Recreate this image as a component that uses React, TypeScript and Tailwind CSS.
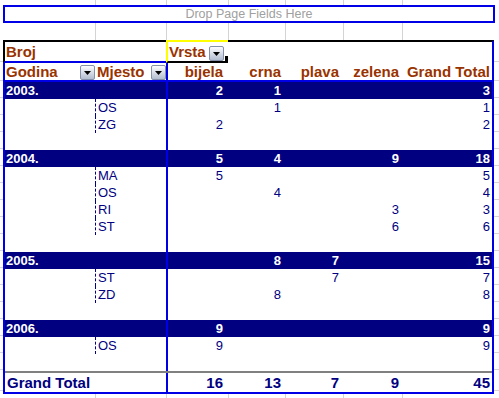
import React from 'react'

type Vals = [string, string, string, string, string]

interface Group {
  year: string
  totals: Vals
  items: { name: string; vals: Vals }[]
}

const GROUPS: Group[] = [
  {
    year: '2003.',
    totals: ['2', '1', '', '', '3'],
    items: [
      { name: 'OS', vals: ['', '1', '', '', '1'] },
      { name: 'ZG', vals: ['2', '', '', '', '2'] },
    ],
  },
  {
    year: '2004.',
    totals: ['5', '4', '', '9', '18'],
    items: [
      { name: 'MA', vals: ['5', '', '', '', '5'] },
      { name: 'OS', vals: ['', '4', '', '', '4'] },
      { name: 'RI', vals: ['', '', '', '3', '3'] },
      { name: 'ST', vals: ['', '', '', '6', '6'] },
    ],
  },
  {
    year: '2005.',
    totals: ['', '8', '7', '', '15'],
    items: [
      { name: 'ST', vals: ['', '', '7', '', '7'] },
      { name: 'ZD', vals: ['', '8', '', '', '8'] },
    ],
  },
  {
    year: '2006.',
    totals: ['9', '', '', '', '9'],
    items: [{ name: 'OS', vals: ['9', '', '', '', '9'] }],
  },
]

const GRAND: Vals = ['16', '13', '7', '9', '45']
const HEADERS: Vals = ['bijela', 'crna', 'plava', 'zelena', 'Grand Total']

// value columns C..G, C carries the blue divider
const COLS = [
  'w-[62px] border-l-2 border-[#0000e6] pr-[5px]',
  'w-[57px] pr-[4px]',
  'w-[58px] pr-[4px]',
  'w-[59px] pr-[3px]',
  'w-[90px] pr-[2px]',
]

function DropBtn() {
  return (
    <span className="flex h-[15px] w-[15px] shrink-0 items-end justify-center rounded-[2px] border border-[#8591a8] bg-linear-to-b from-[#fdfdff] to-[#b3bdd0] pb-[4px]">
      <svg width="7" height="4" viewBox="0 0 7 4">
        <path d="M0 0h7L3.5 4z" fill="#000" />
      </svg>
    </span>
  )
}

// sheet gridlines outside the pivot table
function GridRow({ h }: { h: string }) {
  return (
    <div className={`flex ${h}`}>
      <div className="w-[96px] border-r border-[#d4d4d4]" />
      <div className="w-[71px] border-r border-[#d4d4d4]" />
      <div className="w-[62px] border-r border-[#d4d4d4]" />
      <div className="w-[57px] border-r border-[#d4d4d4]" />
      <div className="w-[58px] border-r border-[#d4d4d4]" />
      <div className="w-[59px] border-r border-[#d4d4d4]" />
      <div className="flex-1" />
    </div>
  )
}

function Ticks() {
  return (
    <div className="flex flex-col">
      <div className="h-[22px] border-b border-[#d4d4d4]" />
      <div className="h-[19px] border-b border-[#d4d4d4]" />
      {Array.from({ length: 17 }).map((_, i) => (
        <div key={i} className="h-[17px] border-b border-[#d4d4d4]" />
      ))}
      <div className="h-[21px] border-b border-[#d4d4d4]" />
    </div>
  )
}

function ValueCells({ vals, className }: { vals: Vals; className?: string }) {
  return (
    <>
      {vals.map((v, i) => (
        <div key={i} className={`${COLS[i]} text-right ${className ?? ''}`}>
          {v}
        </div>
      ))}
    </>
  )
}

export default function App() {
  return (
    <div className="h-[398px] w-[499px] overflow-hidden bg-white font-['Liberation_Sans',Arial,sans-serif]">
      {/* page field drop zone */}
      <GridRow h="h-[5px]" />
      <div className="ml-[3px] flex h-[18px] w-[492px] items-center justify-center border-2 border-[#0000e6] text-[12.5px] text-[#a0a0a0]">
        Drop Page Fields Here
      </div>
      <GridRow h="h-[17px]" />

      <div className="flex">
        <div className="w-[3px]">
          <Ticks />
        </div>

        <div className="w-[491px]">
          {/* data field + column field */}
          <div className="flex h-[23px] text-[15px] font-bold leading-[19px] text-[#993300]">
            <div className="w-[163px] border-t-2 border-l-2 border-b-2 border-t-black border-l-black border-b-[#0000e6] pl-[1px]">
              Broj
            </div>
            <div className="relative flex w-[62px] items-end justify-between border-t-2 border-l-2 border-b-2 border-t-[#ffff00] border-l-[#ffff00] border-b-black pr-[4px] pl-[1px]">
              <span className="self-start">Vrsta</span>
              <DropBtn />
              <span className="absolute right-0 bottom-0 h-[5px] w-[3px] bg-black" />
            </div>
            <div className="flex-1 border-t-2 border-r-2 border-t-black border-r-[#0000e6]" />
          </div>

          {/* row fields + column items */}
          <div className="flex h-[19px] border-x-2 border-b-2 border-[#0000e6] text-[15px] font-bold leading-[17px] text-[#993300]">
            <div className="flex w-[90px] items-end justify-between pl-[1px]">
              <span className="self-start">Godina</span>
              <DropBtn />
            </div>
            <div className="flex w-[71px] items-end justify-between pl-[2px]">
              <span className="self-start">Mjesto</span>
              <DropBtn />
            </div>
            <ValueCells vals={HEADERS} />
          </div>

          {/* body */}
          <div className="border-x-2 border-b-2 border-[#0000e6] text-[13px] leading-[17px] text-[#000080]">
            {GROUPS.map((g) => (
              <div key={g.year}>
                <div className="flex h-[17px] bg-[#000080] font-bold text-white">
                  <div className="w-[161px] pl-[1px]">{g.year}</div>
                  <ValueCells vals={g.totals} />
                </div>
                {g.items.map((it) => (
                  <div key={it.name} className="flex h-[17px]">
                    <div className="w-[90px]" />
                    <div className="w-[71px] border-l border-dashed border-[#000080] pl-[2px]">{it.name}</div>
                    <ValueCells vals={it.vals} />
                  </div>
                ))}
                <div className="flex h-[17px]">
                  <div className="w-[161px]" />
                  <div className="h-full w-[62px] border-l-2 border-[#0000e6]" />
                </div>
              </div>
            ))}

            <div className="h-[2px] bg-[#808080]" />
            <div className="flex h-[19px] text-[15px] font-bold leading-[19px]">
              <div className="w-[161px] pl-[2px]">Grand Total</div>
              <ValueCells vals={GRAND} />
            </div>
          </div>
        </div>

        <div className="flex-1">
          <Ticks />
        </div>
      </div>

      <GridRow h="h-[4px]" />
    </div>
  )
}
